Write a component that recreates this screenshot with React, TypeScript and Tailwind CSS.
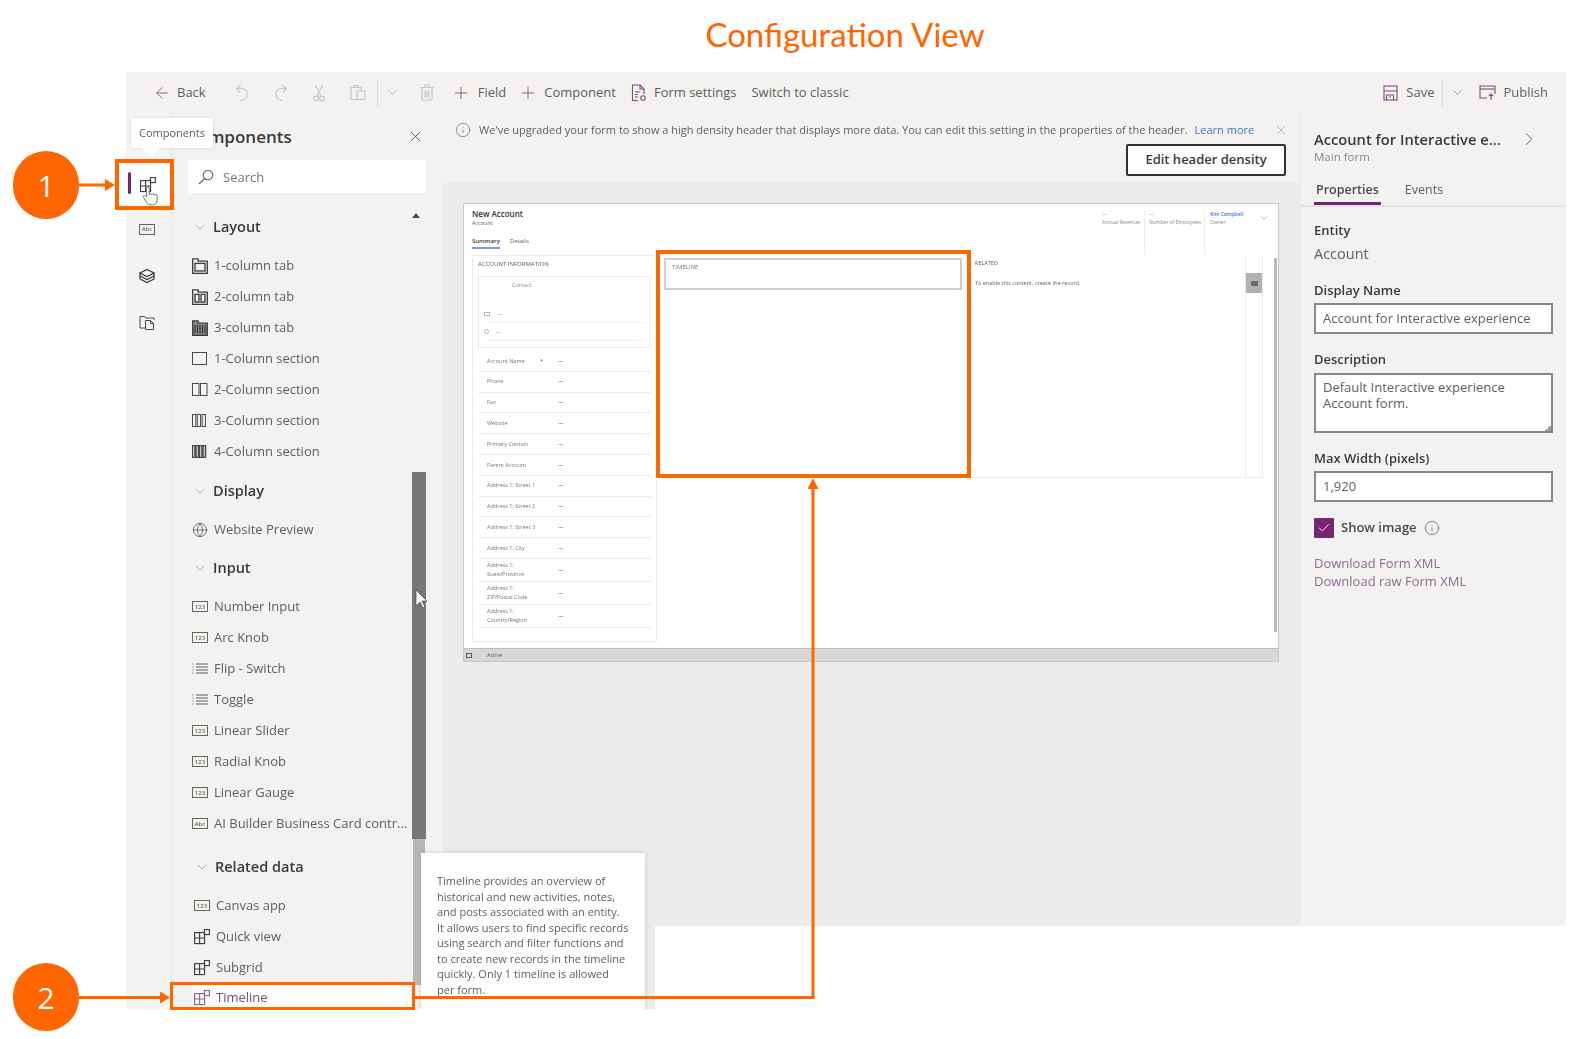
import { ArrowLeft, ChevronDown, ChevronRight, Check, Globe, Info, Plus, X } from 'lucide-react';

const sans = 'font-["Open_Sans","Noto_Sans",sans-serif]';

// ---- small drawn icons ----
function GridIcon({ className = 'text-[#3b3a39]' }: { className?: string }) {
  return (
    <svg width="16" height="16" viewBox="0 0 16 16" fill="none" stroke="currentColor" strokeWidth="1.1">
      <g className={className}>
        <rect x="0.6" y="3.6" width="10" height="11" />
        <path d="M5.6 3.6v11M.6 9h10" />
        <rect x="10.4" y="0.6" width="5" height="5" />
      </g>
    </svg>
  );
}

function TabIcon({ cols }: { cols: number }) {
  return (
    <svg width="16" height="16" viewBox="0 0 16 16" fill="none" stroke="#3b3a39" strokeWidth="1.3">
      <path d="M.7 15.300V.9h5.400v2.300h9.200v12.100z" fill={cols === 3 ? '#8a8886' : 'none'} />
      {cols === 1 && <rect x="3" y="5.400" width="10" height="7.600" />}
      {cols === 2 && <path d="M3 5.400h4v7.600H3zM9 5.400h4v7.600H9z" />}
      {cols === 3 && <path d="M3 5v8.500M5.500 5v8.500M8 5v8.500M10.500 5v8.500M13 5v8.500" strokeWidth="1.2" />}
    </svg>
  );
}

const sectionRects: Record<number, { w: number; gap: number; sw: number }> = {
  1: { w: 14, gap: 0, sw: 1 },
  2: { w: 6.500, gap: 1.500, sw: 1 },
  3: { w: 3.300, gap: 1.500, sw: 1 },
  4: { w: 2.500, gap: 1, sw: 1.500 },
};

function SectionIcon({ cols }: { cols: number }) {
  const { w, gap, sw } = sectionRects[cols];
  return (
    <svg width="16" height="13" viewBox="0 0 16 13" fill="none" stroke="#4a4948" strokeWidth={sw}>
      {Array.from({ length: cols }).map((_, i) => (
        <rect key={i} x={0.5 + i * (w + gap)} y="0.5" width={w} height="12" />
      ))}
    </svg>
  );
}

function BoxIcon({ label }: { label: string }) {
  return (
    <div className="flex h-[11px] w-[16px] items-center justify-center border border-[#66645f] text-[6px] leading-none font-semibold text-[#66645f]">
      {label}
    </div>
  );
}

function ListIcon() {
  return (
    <svg width="16" height="11" viewBox="0 0 16 11" fill="none" stroke="#5f5e5c" strokeWidth="1">
      <path d="M4 1h12M4 4h12M4 7h12M4 10h12" />
      <path d="M.5 1h1M.5 4h1M.5 7h1M.5 10h1" />
    </svg>
  );
}

function LayersIcon() {
  return (
    <svg width="16" height="16" viewBox="0 0 16 16" fill="none" stroke="#3b3a39" strokeWidth="1.3">
      <path d="M8 1.500 15 5 8 8.500 1 5z" />
      <path d="M1 8l7 3.500L15 8" />
      <path d="M1 11l7 3.500 7-3.500" />
      <path d="M1 5v6M15 5v6" />
    </svg>
  );
}

function PagesIcon() {
  return (
    <svg width="16" height="16" viewBox="0 0 16 16" fill="none" stroke="#4a4948" strokeWidth="1">
      <path d="M1 13V1.500h4.500l1 1.500H15v2" />
      <path d="M1 13h5" />
      <path d="M6.500 5.500h5l3 3v6h-8z" />
      <path d="M11.500 5.500v3h3" />
    </svg>
  );
}

function FormIcon() {
  return (
    <svg width="16" height="18" viewBox="0 0 16 18" fill="none" stroke="#7b4a7d" strokeWidth="1.100">
      <path d="M7 16.500H1.500V1h7.500l4 4v5" />
      <path d="M9 1v4h4" />
      <path d="M4 8h5M4 10.500h3M4 13h3" />
      <circle cx="12" cy="14" r="2.200" />
    </svg>
  );
}

function SaveIcon() {
  return (
    <svg width="15" height="16" viewBox="0 0 15 16" fill="none" stroke="#7b4a7d" strokeWidth="1.100">
      <rect x="1" y="1" width="13" height="14" />
      <path d="M1 6h13M3.500 15v-5h7v5" />
      <path d="M6 12h2" />
    </svg>
  );
}

function PublishIcon() {
  return (
    <svg width="17" height="16" viewBox="0 0 17 16" fill="none" stroke="#7b4a7d" strokeWidth="1.100">
      <path d="M8 13H1V1h15v8" />
      <path d="M1 4h15" />
      <path d="M12 15V9M10 11l2-2 2 2" />
    </svg>
  );
}

function PanelSearchIcon() {
  return (
    <svg width="16" height="16" viewBox="0 0 16 16" fill="none" stroke="#7b4a7d" strokeWidth="1.100">
      <circle cx="10" cy="6" r="4.800" />
      <path d="M6.500 9.500 1 15" />
    </svg>
  );
}

function UndoIcon({ flip }: { flip?: boolean }) {
  return (
    <svg width="16" height="18" viewBox="0 0 16 18" fill="none" stroke="#c8c6c4" strokeWidth="1.200" className={flip ? '-scale-x-100' : ''}>
      <path d="M6 17c4.500-1 8-4 7-8.500C12.200 5 8 4 2.500 4.500" />
      <path d="M6.500 1 2.500 4.500 6 8.500" />
    </svg>
  );
}

function CutIcon() {
  return (
    <svg width="14" height="18" viewBox="0 0 14 18" fill="none" stroke="#c8c6c4" strokeWidth="1.200">
      <path d="M3.500 1 9 12.500M10.500 1 5 12.500" />
      <circle cx="4" cy="14.500" r="2.300" />
      <circle cx="10" cy="14.500" r="2.300" />
    </svg>
  );
}

function PasteIcon() {
  return (
    <svg width="16" height="17" viewBox="0 0 16 17" fill="none" stroke="#c8c6c4" strokeWidth="1.200">
      <path d="M7 15.500H1V3.500h10v3" />
      <path d="M4 3.500V1.500h4v2" />
      <rect x="7" y="7" width="8" height="8.500" />
    </svg>
  );
}

function TrashIcon() {
  return (
    <svg width="14" height="17" viewBox="0 0 14 17" fill="none" stroke="#c8c6c4" strokeWidth="1.200">
      <path d="M.5 3.500h13M5 3.500V1h4v2.500" />
      <path d="M2 3.500v12.500h10V3.500" />
      <path d="M5 6.500v7M7 6.500v7M9 6.500v7" />
    </svg>
  );
}

// ---- left component list ----
type Item = { label: string; icon: React.ReactNode };

const box123 = <BoxIcon label="123" />;

const layoutItems: Item[] = [
  { label: '1-column tab', icon: <TabIcon cols={1} /> },
  { label: '2-column tab', icon: <TabIcon cols={2} /> },
  { label: '3-column tab', icon: <TabIcon cols={3} /> },
  { label: '1-Column section', icon: <SectionIcon cols={1} /> },
  { label: '2-Column section', icon: <SectionIcon cols={2} /> },
  { label: '3-Column section', icon: <SectionIcon cols={3} /> },
  { label: '4-Column section', icon: <SectionIcon cols={4} /> },
];

const inputItems: Item[] = [
  { label: 'Number Input', icon: box123 },
  { label: 'Arc Knob', icon: box123 },
  { label: 'Flip - Switch', icon: <ListIcon /> },
  { label: 'Toggle', icon: <ListIcon /> },
  { label: 'Linear Slider', icon: box123 },
  { label: 'Radial Knob', icon: box123 },
  { label: 'Linear Gauge', icon: box123 },
  { label: 'AI Builder Business Card contr...', icon: <BoxIcon label="Abc" /> },
];

function GroupHeader({ title, className = '' }: { title: string; className?: string }) {
  return (
    <div className={`mb-[9px] flex h-[29px] items-center ${className}`}>
      <ChevronDown size={16} strokeWidth={1} className="mr-[5px] ml-[20px] text-[#8a8886]" />
      <span className="text-[14.500px] font-semibold text-[#3b3a39]">{title}</span>
    </div>
  );
}

function ListRow({ item }: { item: Item }) {
  return (
    <div className="flex h-[31px] items-center pl-[20px] text-[13px] whitespace-nowrap text-[#605e5c]">
      <span className="flex w-[22px] shrink-0 items-center">{item.icon}</span>
      <span>{item.label}</span>
    </div>
  );
}

function ComponentsPanel() {
  return (
    <div className="flex h-full w-[271px] shrink-0 flex-col border-l border-[#e8e6e4] bg-[#f3f2f1]">
      <div className="flex h-[47px] shrink-0 items-center justify-between pr-[18px] pl-[15px]">
        <span className="text-[17px] font-semibold text-[#3b3a39]">Components</span>
        <X size={17} strokeWidth={1.200} className="text-[#4a4948]" />
      </div>
      <div className="mr-[16px] ml-[16px] flex h-[33px] shrink-0 items-center gap-[9px] bg-white pl-[10px] text-[13px] text-[#797775]">
        <PanelSearchIcon />
        <span className="pt-[2px]">Search</span>
      </div>
      <div className="flex min-h-0 flex-1">
        <div className="w-[240px] shrink-0 pt-[19px]">
          <GroupHeader title="Layout" />
          {layoutItems.map((it) => (
            <ListRow key={it.label} item={it} />
          ))}
          <GroupHeader title="Display" className="mt-[9px]" />
          <ListRow item={{ label: 'Website Preview', icon: <Globe size={16} strokeWidth={1.100} className="text-[#4a4948]" /> }} />
          <GroupHeader title="Input" className="mt-[8px]" />
          {inputItems.map((it) => (
            <ListRow key={it.label} item={it} />
          ))}
          <div className="pl-[2px]">
            <GroupHeader title="Related data" className="mt-[13px]" />
            <ListRow item={{ label: 'Canvas app', icon: box123 }} />
            <ListRow item={{ label: 'Quick view', icon: <GridIcon /> }} />
            <ListRow item={{ label: 'Subgrid', icon: <GridIcon /> }} />
            <div className="ml-[18px] flex h-[30px] items-center bg-white pl-[2px] text-[13px] text-[#7b4a7d]">
              <span className="flex w-[22px] shrink-0 items-center">
                <GridIcon className="text-[#8d5b90]" />
              </span>
              <span>Timeline</span>
            </div>
          </div>
        </div>
        <div className="w-[14px] shrink-0 pt-[20px]">
          <div className="mb-[254px] h-0 w-0 border-x-[4px] border-b-[5px] border-x-transparent border-b-[#4a4948]" />
          <div className="h-[367px] bg-[#797775]" />
          <div className="mx-[1px] h-[146px] bg-[#b8b7b6]" />
        </div>
      </div>
    </div>
  );
}

// ---- form preview ----
const rows: [string, number][] = [
  ['Phone', 20.800],
  ['Fax', 20.800],
  ['Website', 20.800],
  ['Primary Contact', 20.800],
  ['Parent Account', 20.800],
  ['Address 1: Street 1', 20.800],
  ['Address 1: Street 2', 20.800],
  ['Address 1: Street 3', 20.800],
  ['Address 1: City', 20.800],
  ['Address 1: State/Province', 23],
  ['Address 1: ZIP/Postal Code', 23],
  ['Address 1: Country/Region', 23],
];

function FormRow({ label, height, required }: { label: string; height: number; required?: boolean }) {
  return (
    <div className="flex items-center border-b border-[#ececec] text-[5.500px] leading-[8.500px] text-[#797775]" style={{ height }}>
      <span className="w-[62px] shrink-0 pl-[9px]">{label}</span>
      <span className="w-[18px] shrink-0 text-[#a4262c]">{required ? '*' : ''}</span>
      <span className="font-bold">---</span>
    </div>
  );
}

function FormPreview() {
  return (
    <div className="ml-[21px] flex h-[459px] w-[816px] flex-col border border-[#cfc5d0] bg-white">
      <div className="flex h-[51px] shrink-0 justify-between pt-[5px] pr-[9px] pl-[8px]">
        <div>
          <div className="text-[8px] leading-[10px] font-semibold text-[#323130]">New Account</div>
          <div className="text-[5.500px] leading-[8px] text-[#605e5c]">Account</div>
          <div className="mt-[10px] flex gap-[10px] text-[6px] leading-[9px]">
            <span className="border-b-2 border-[#7a9bd8] pb-[1px] font-semibold text-[#323130]">Summary</span>
            <span className="text-[#605e5c]">Details</span>
          </div>
        </div>
        <div className="flex pt-[1px] text-[5px] leading-[8px] text-[#8a8886]">
          <div className="w-[42px]">
            <div>---</div>
            <div>Annual Revenue</div>
          </div>
          <div className="w-[60px] border-l border-[#eee] pl-[4px]">
            <div>---</div>
            <div>Number of Employees</div>
          </div>
          <div className="w-[55px] border-l border-[#eee] pl-[5px]">
            <div className="font-semibold text-[#3b78d8]">Kim Campbell</div>
            <div>Owner</div>
          </div>
          <ChevronDown size={10} strokeWidth={1} className="mt-[3px] text-[#605e5c]" />
        </div>
      </div>
      <div className="flex h-[387px] shrink-0 pl-[8px]">
        <div className="h-full w-[185px] shrink-0 border border-[#ececec] pr-[5px] pl-[5px]">
          <div className="h-[20px] pt-[4px] text-[6px] leading-[9px] text-[#605e5c]">ACCOUNT INFORMATION</div>
          <div className="h-[72px] border border-[#ececec] px-[5px] pt-[4px] text-[5.500px] leading-[8px] text-[#8a8886]">
            <div className="pl-[28px]">Contact</div>
            <div className="mt-[17px] flex h-[17px] items-center gap-[7px] border-b border-[#f3f3f3]">
              <span className="h-[4px] w-[6px] border border-[#b3b3b3]" />
              <span>---</span>
            </div>
            <div className="flex h-[18px] items-center gap-[7px] border-b border-[#f3f3f3]">
              <span className="h-[5px] w-[5px] rounded-full border border-[#b3b3b3]" />
              <span>---</span>
            </div>
          </div>
          <div className="mt-[3px]">
            <FormRow label="Account Name" height={20.800} required />
            {rows.map(([label, h]) => (
              <FormRow key={label} label={label} height={h} />
            ))}
          </div>
        </div>
        <div className="w-[309px] shrink-0 pt-[3px] pl-[7px]">
          <div className="h-[32px] w-[298px] border-2 border-[#d8ccd9] pt-[3px] pl-[6px] text-[6px] leading-[9px] text-[#797775]">TIMELINE</div>
        </div>
        <div className="flex h-[223px] w-[297px] shrink-0 border-b border-[#ececec]">
          <div className="flex-1 pt-[4px] pl-[9px] text-[5.500px] text-[#605e5c]">
            <div className="leading-[9px]">RELATED</div>
            <div className="mt-[11px] leading-[8px]">To enable this content, create the record.</div>
          </div>
          <div className="w-[18px] shrink-0 border-x border-[#ececec] pt-[18px]">
            <div className="flex h-[20px] items-center justify-center bg-[#b3b1af]">
              <div className="h-[5px] w-[7px] bg-[#6b6a68]" />
            </div>
          </div>
        </div>
        <div className="mt-[3px] ml-[11px] h-[374px] w-[3px] bg-[#bdbbb9]" />
      </div>
      <div className="mt-[6px] flex h-[13px] items-center gap-[15px] border-t border-[#bebdbc] bg-[#d8d7d6] pl-[2px] text-[5.500px] text-[#605e5c]">
        <span className="h-[5px] w-[6px] border border-[#605e5c]" />
        <span>Active</span>
      </div>
    </div>
  );
}

function RightPanel() {
  const label = 'text-[13px] leading-[18px] font-semibold text-[#3b3a39]';
  const input = 'border-2 border-[#8a8886] bg-white pl-[7px] text-[13px] text-[#605e5c]';
  return (
    <div className="h-full w-[267px] shrink-0 border-l-2 border-[#eeecea] bg-[#f3f2f1]">
      <div className="flex items-start justify-between pt-[16px] pr-[26px] pl-[13px]">
        <div>
          <div className="text-[14.700px] leading-[20px] font-semibold whitespace-nowrap text-[#3b3a39]">Account for Interactive e...</div>
          <div className="text-[11.500px] leading-[15px] text-[#8a8886]">Main form</div>
        </div>
        <ChevronRight size={22} strokeWidth={1} className="mt-[-1px] text-[#605e5c]" />
      </div>
      <div className="mt-[16px] flex h-[27px] gap-[24px] border-b-2 border-[#e5e3e1] pl-[13px] text-[12.500px] leading-[20px] text-[#605e5c]">
        <span className="h-[25px] border-b-[3px] border-[#742774] px-[2px] font-semibold text-[#4a4948]">Properties</span>
        <span>Events</span>
      </div>
      <div className="px-[13px] pt-[14px]">
        <div className={label}>Entity</div>
        <div className="mt-[5px] text-[14.500px] leading-[20px] text-[#605e5c]">Account</div>
        <div className={`mt-[17px] ${label}`}>Display Name</div>
        <div className={`mt-[4px] flex h-[31px] w-[239px] items-center pt-[1px] ${input}`}>Account for Interactive experience</div>
        <div className={`mt-[16px] ${label}`}>Description</div>
        <div className={`relative mt-[5px] h-[60px] w-[239px] pt-[4px] leading-[16px] ${input}`}>
          Default Interactive experience
          <br />
          Account form.
          <div className="absolute right-0 bottom-0 h-[6px] w-[6px] bg-[linear-gradient(135deg,transparent_50%,#a19f9d_50%)]" />
        </div>
        <div className={`mt-[16px] ${label}`}>Max Width (pixels)</div>
        <div className={`mt-[4px] flex h-[31px] w-[239px] items-center pt-[1px] ${input}`}>1,920</div>
        <div className="mt-[16px] flex h-[20px] items-center">
          <div className="flex h-[20px] w-[20px] items-center justify-center rounded-[1px] bg-[#742774]">
            <Check size={14} strokeWidth={1.500} className="text-white" />
          </div>
          <span className="ml-[7px] text-[13px] font-semibold text-[#4a4948]">Show image</span>
          <Info size={16} strokeWidth={1} className="ml-[7px] text-[#4a4948]" />
        </div>
        <div className="mt-[16px] text-[13px] leading-[18px] text-[#8f6a92]">
          <div>Download Form XML</div>
          <div>Download raw Form XML</div>
        </div>
      </div>
    </div>
  );
}

function Toolbar() {
  return (
    <div className="flex h-[41px] shrink-0 items-center bg-[#f3f2f1] pl-[27px] text-[13px] whitespace-nowrap text-[#605e5c]">
      <ArrowLeft size={18} strokeWidth={1.100} className="text-[#7b4a7d]" />
      <span className="ml-[6px]">Back</span>
      <span className="ml-[28px]">
        <UndoIcon />
      </span>
      <span className="ml-[23px]">
        <UndoIcon flip />
      </span>
      <span className="ml-[23px]">
        <CutIcon />
      </span>
      <span className="ml-[24px]">
        <PasteIcon />
      </span>
      <div className="ml-[11px] h-[28px] w-px bg-[#dddbd9]" />
      <ChevronDown size={15} strokeWidth={1} className="ml-[7px] text-[#a19f9d]" />
      <span className="ml-[20px]">
        <TrashIcon />
      </span>
      <Plus size={20} strokeWidth={1} className="ml-[17px] text-[#7b4a7d]" />
      <span className="ml-[7px]">Field</span>
      <Plus size={20} strokeWidth={1} className="ml-[12px] text-[#7b4a7d]" />
      <span className="ml-[6px]">Component</span>
      <span className="ml-[15px]">
        <FormIcon />
      </span>
      <span className="ml-[7px]">Form settings</span>
      <span className="ml-[15px]">Switch to classic</span>
      <div className="ml-auto flex items-center pr-[18px]">
        <SaveIcon />
        <span className="ml-[8px]">Save</span>
        <div className="ml-[7px] h-[28px] w-px bg-[#dddbd9]" />
        <ChevronDown size={15} strokeWidth={1} className="ml-[7px] text-[#605e5c]" />
        <span className="ml-[14px]">
          <PublishIcon />
        </span>
        <span className="ml-[8px]">Publish</span>
      </div>
    </div>
  );
}

function MainColumn() {
  return (
    <div className="flex h-full w-[857px] shrink-0 flex-col bg-[#edebe9]">
      <div className="h-[70px] shrink-0 bg-[#f4f2f1] pr-[11px] pl-[13px]">
        <div className="flex h-[31px] items-center pt-[3px] text-[11px] whitespace-nowrap text-[#605e5c]">
          <Info size={16} strokeWidth={1} className="mr-[8px] shrink-0" />
          <span>We&apos;ve upgraded your form to show a high density header that displays more data. You can edit this setting in the properties of the header.</span>
          <span className="ml-[7px] text-[#3b78c8]">Learn more</span>
          <X size={14} strokeWidth={1} className="ml-auto shrink-0 text-[#8a8886]" />
        </div>
        <div className="flex justify-end pr-[2px]">
          <div className="flex h-[32px] w-[160px] items-center justify-center rounded-[2px] border-2 border-[#323130] bg-white text-[13px] font-semibold text-[#3b3a39]">
            Edit header density
          </div>
        </div>
      </div>
      <div className="pt-[20px]">
        <FormPreview />
      </div>
    </div>
  );
}

function HandCursor() {
  return (
    <svg width="18" height="21" viewBox="0 0 20 24" fill="#fff" stroke="#605e5c" strokeWidth="1">
      <path d="M5 2.500c0-2 3-2 3 0V10c0-1.600 3-1.600 3 0 0-1.400 3-1.400 3 .4 0-1 3-1 3 .8v5c0 3-2 5.300-5 5.300H9c-2 0-3-1-4-2.500L1.500 13c-1-1.700 1-3 2.300-1.700L5 12.500z" />
    </svg>
  );
}

function Annotations() {
  const tick = '#ff6600';
  return (
    <>
      <div className="absolute top-[118px] left-[131px] flex h-[30px] w-[82px] items-center justify-center bg-white text-[11px] text-[#605e5c] shadow-[0_0_3px_rgba(0,0,0,0.12)]">
        Components
      </div>
      <div className="absolute top-[148px] left-[142px] h-0 w-0 border-x-[9px] border-t-[10px] border-x-transparent border-t-white" />
      <div className="absolute top-[853px] left-[421px] h-[156px] w-[224px] bg-white pt-[20px] pl-[16px] text-[11px] leading-[15.500px] whitespace-nowrap text-[#605e5c] shadow-[0_0_4px_rgba(0,0,0,0.15)]">
        Timeline provides an overview of
        <br />
        historical and new activities, notes,
        <br />
        and posts associated with an entity.
        <br />
        It allows users to find specific records
        <br />
        using search and filter functions and
        <br />
        to create new records in the timeline
        <br />
        quickly. Only 1 timeline is allowed
        <br />
        per form.
      </div>
      <div className="absolute top-[926px] left-[655px] h-[113px] w-[927px] bg-white" />
      <div className="absolute top-[1009px] left-[0px] h-[30px] w-[655px] bg-white" />

      <div className="absolute top-[159px] left-[115px] h-[51px] w-[59px] border-4 border-[#ff6600]" />
      <div className="absolute top-[172px] left-[128px] h-[22px] w-[3px] rounded-full bg-[#742774]" />
      <div className="absolute top-[186px] left-[142px]">
        <HandCursor />
      </div>
      <div className="absolute top-[250px] left-[656px] h-[228px] w-[315px] border-4 border-[#ff6600]" />
      <div className="absolute top-[982px] left-[170px] h-[28px] w-[245px] border-[3px] border-[#ff6600]" />

      <div className={`absolute top-[151px] left-[13px] flex h-[68px] w-[66px] items-center justify-center rounded-full bg-[#ff6600] text-[30px] text-white ${sans}`}>1</div>
      <div className={`absolute top-[963px] left-[13px] flex h-[68px] w-[66px] items-center justify-center rounded-full bg-[#ff6600] text-[30px] text-white ${sans}`}>2</div>

      <svg width="1582" height="1039" viewBox="0 0 1582 1039" fill="none" className="pointer-events-none absolute top-0 left-0">
        <path d="M79 185h28" stroke={tick} strokeWidth="3" />
        <path d="M105 179l10 6-10 6z" fill={tick} />
        <path d="M79 997.500h83" stroke={tick} strokeWidth="3" />
        <path d="M160 991.500l10 6-10 6z" fill={tick} />
        <path d="M415 997.500h398V486" stroke={tick} strokeWidth="3" />
        <path d="M807.500 489l5.500-11 5.500 11z" fill={tick} />
        <path d="M416 590v16l4-4 3 6 2-1-3-6h5z" fill="#fff" stroke="#323130" strokeWidth="0.600" />
      </svg>
    </>
  );
}

export default function App() {
  return (
    <div className={`relative h-[1039px] w-[1582px] overflow-hidden bg-white ${sans}`}>
      <div className="flex h-[72px] items-center justify-center pl-[108px]">
        <h1 className='pb-[3px] font-["Lato",sans-serif] text-[33px] font-normal text-[#ff6600]'>Configuration View</h1>
      </div>
      <div className="ml-[126px] flex h-[937px] w-[1440px] flex-col blur-[0.4px]">
        <Toolbar />
        <div className="flex min-h-0 flex-1">
          <div className="w-[45px] shrink-0 bg-[#f5f4f3] pt-[50px]">
            <div className="flex h-[43px] items-center bg-white pl-[14px]">
              <GridIcon />
            </div>
            <div className="mt-[13px] flex h-[20px] items-center pl-[13px]">
              <BoxIcon label="Abc" />
            </div>
            <div className="mt-[27px] flex h-[20px] items-center pl-[13px]">
              <LayersIcon />
            </div>
            <div className="mt-[27px] flex h-[20px] items-center pl-[13px]">
              <PagesIcon />
            </div>
          </div>
          <ComponentsPanel />
          <MainColumn />
          <RightPanel />
        </div>
      </div>
      <Annotations />
    </div>
  );
}
